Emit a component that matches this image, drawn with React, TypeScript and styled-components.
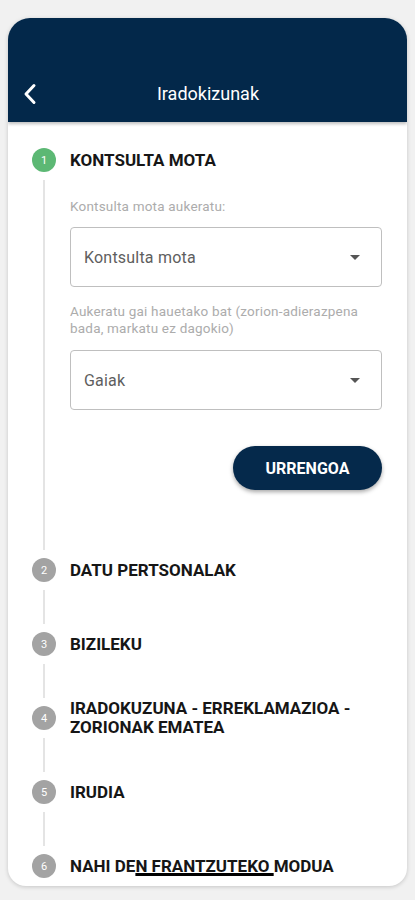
import React from "react";
import styled, { createGlobalStyle } from "styled-components";

type StepData = {
    number: number,
    title: string,
    marked?: [number, number],
    active?: boolean
}

const steps: StepData[] = [
    { number: 1, title: "KONTSULTA MOTA", active: true },
    { number: 2, title: "DATU PERTSONALAK" },
    { number: 3, title: "BIZILEKU" },
    { number: 4, title: "IRADOKUZUNA - ERREKLAMAZIOA - ZORIONAK EMATEA" },
    { number: 5, title: "IRUDIA" },
    { number: 6, title: "NAHI DEN FRANTZUTEKO MODUA", marked: [7, 21] },
]

const ConsultForm = () => {
    return(
        <>
            <FieldLabel>Kontsulta mota aukeratu:</FieldLabel>
            <SelectBox>
                <span>Kontsulta mota</span>
                <Caret />
            </SelectBox>
            <FieldLabel $spaced>Aukeratu gai hauetako bat (zorion-adierazpena bada, markatu ez dagokio)</FieldLabel>
            <SelectBox>
                <span>Gaiak</span>
                <Caret />
            </SelectBox>
            <ButtonRow>
                <NextButton>URRENGOA</NextButton>
            </ButtonRow>
        </>
    )
}

const renderTitle = (step: StepData) => {
    if(!step.marked) return step.title
    const [a, b] = step.marked
    return <>
        {step.title.slice(0, a)}
        <Marked>{step.title.slice(a, b)}</Marked>
        {step.title.slice(b)}
    </>
}

const App = () => {
    return(
        <>
            <GlobalStyle />
            <Page>
                <Card>
                    <Header>
                        <BackButton aria-label="back">
                            <svg width="14" height="22" viewBox="0 0 14 22" fill="none">
                                <path d="M11 2.5 L3 11 L11 19.5" stroke="#fff" strokeWidth="3" strokeLinecap="round" strokeLinejoin="round" />
                            </svg>
                        </BackButton>
                        <HeaderTitle>Iradokizunak</HeaderTitle>
                        <HeaderSpacer />
                    </Header>
                    <Stepper>
                        {steps.map((step, index) => {
                            const last = index === steps.length - 1
                            return <Step key={step.number}>
                                <StepHead>
                                    <Circle $active={step.active}>{step.number}</Circle>
                                    <StepTitle>{renderTitle(step)}</StepTitle>
                                </StepHead>
                                {!last && <StepBody $filled={step.active}>
                                    {step.active && <ConsultForm />}
                                </StepBody>}
                            </Step>
                        })}
                    </Stepper>
                </Card>
            </Page>
        </>
    )
}

export default App;

const GlobalStyle = createGlobalStyle`
    body {
        margin: 0;
        background: #f1f1f1;
        font-family: Roboto, "Liberation Sans", sans-serif;
    }
`

const Page = styled.div`
    padding: 18px 8px 14px;
`

const Card = styled.div`
    background: #fff;
    border-radius: 22px 22px 18px 18px;
    overflow: hidden;
    box-shadow: 0px 1px 4px rgba(0, 0, 0, 0.18);
`

const Header = styled.div`
    display: flex;
    align-items: flex-end;
    height: 104px;
    padding: 0 14px 17px;
    box-sizing: border-box;
    background: #03284a;
    box-shadow: 0px 2px 3px rgba(0, 0, 0, 0.25);
    position: relative;
`

const BackButton = styled.div`
    display: flex;
    align-items: center;
    width: 40px;
    height: 22px;
    padding-left: 1px;
`

const HeaderSpacer = styled.div`
    width: 40px;
`

const HeaderTitle = styled.div`
    flex: 1;
    text-align: center;
    color: #fff;
    font-size: 18px;
    line-height: 22px;
`

const Stepper = styled.div`
    display: flex;
    flex-direction: column;
    padding: 26px 25px 8px 24px;
`

const Step = styled.div`
    display: flex;
    flex-direction: column;
`

const StepHead = styled.div`
    display: flex;
    align-items: center;
    gap: 14px;
    height: 24px;
`

const Circle = styled.div<{$active?: boolean}>`
    flex: none;
    display: flex;
    align-items: center;
    justify-content: center;
    width: 24px;
    height: 24px;
    border-radius: 50%;
    background: ${props => props.$active ? "#5cb874" : "#a3a3a3"};
    color: #fff;
    font-size: 11px;
`

const StepTitle = styled.div`
    font-size: 17px;
    font-weight: 700;
    line-height: 19px;
    color: #161616;
`

const Marked = styled.span`
    text-decoration: underline;
    text-decoration-color: #000;
    text-decoration-thickness: 2.5px;
    text-decoration-skip-ink: none;
    text-underline-offset: 1px;
`

const StepBody = styled.div<{$filled?: boolean}>`
    display: flex;
    flex-direction: column;
    min-height: 34px;
    margin: 8px 0 8px 11px;
    padding: ${props => props.$filled ? "18px 0 60px 25px" : "0 0 0 25px"};
    border-left: 2px solid #e4e4e4;
`

const FieldLabel = styled.div<{$spaced?: boolean}>`
    font-size: 13.5px;
    letter-spacing: 0.2px;
    line-height: 17px;
    color: #acacac;
    margin-top: ${props => props.$spaced ? "16px" : "0px"};
    margin-bottom: ${props => props.$spaced ? "13px" : "12px"};
`

const SelectBox = styled.div`
    display: flex;
    align-items: center;
    justify-content: space-between;
    height: 60px;
    box-sizing: border-box;
    padding: 0 21px 0 13px;
    border: 1px solid #bfbfbf;
    border-radius: 4px;
    font-size: 16px;
    letter-spacing: 0.2px;
    color: #5e5e5e;
`

const Caret = styled.div`
    width: 0;
    height: 0;
    border-left: 5px solid transparent;
    border-right: 5px solid transparent;
    border-top: 5px solid #555;
`

const ButtonRow = styled.div`
    display: flex;
    justify-content: flex-end;
    margin-top: 36px;
`

const NextButton = styled.button`
    width: 149px;
    height: 44px;
    border: none;
    border-radius: 22px;
    background: #05294b;
    color: #fff;
    font-family: Roboto, "Liberation Sans", sans-serif;
    font-weight: 700;
    font-size: 16px;
    box-shadow: 0px 2px 4px rgba(0, 0, 0, 0.35);
`
